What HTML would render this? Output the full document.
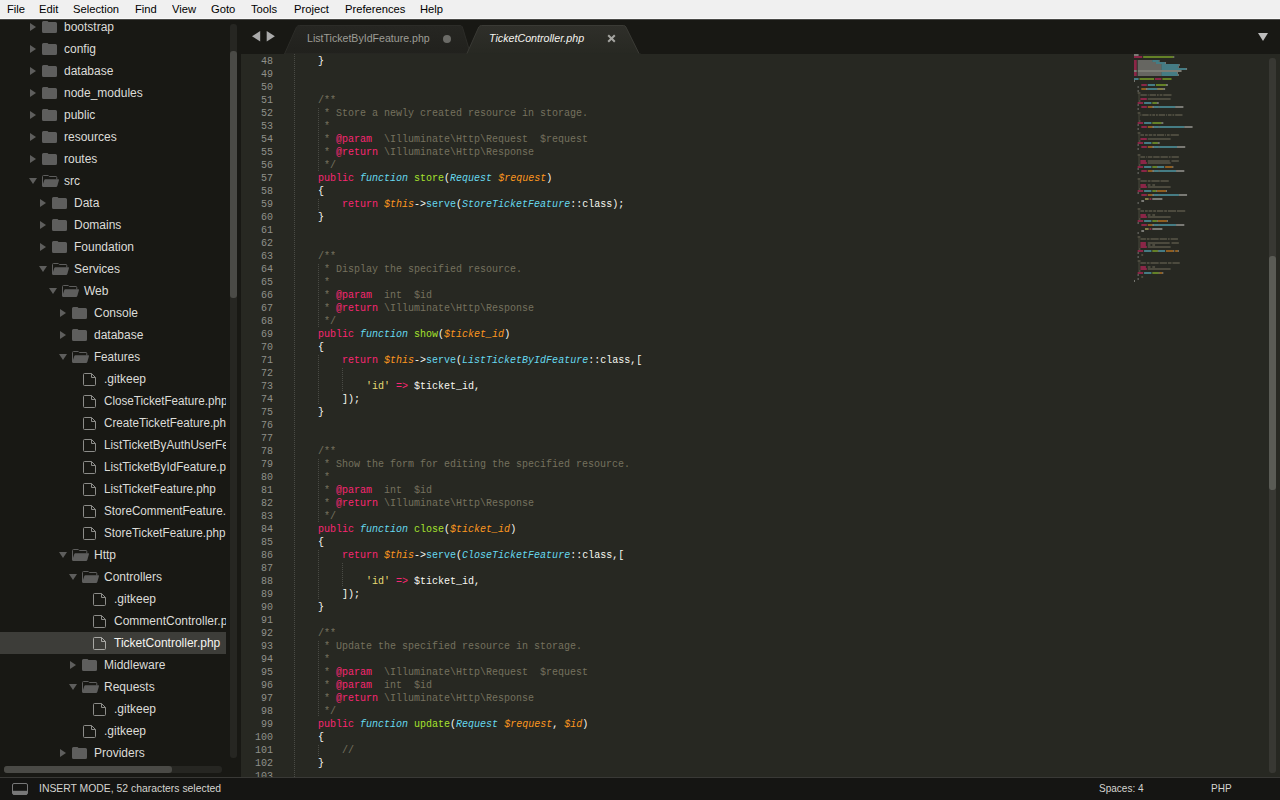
<!DOCTYPE html>
<html><head><meta charset="utf-8"><style>
html,body{margin:0;padding:0;width:1280px;height:800px;overflow:hidden;background:#181814}
*{box-sizing:border-box}
.abs{position:absolute}
#menu{position:absolute;left:0;top:0;width:1280px;height:19px;background:#f0f0f0;border-bottom:1px solid #f8f8f8}
#menu span{position:absolute;top:2px;font:11.8px "Liberation Sans",sans-serif;color:#000;white-space:nowrap;line-height:14px;transform:scaleX(0.95);transform-origin:0 0}
#side{position:absolute;left:0;top:19px;width:241px;height:758px;background:#181814;overflow:hidden}
.row{position:absolute;left:0;width:226px;height:22px}
.row.sel{background:#3d3d39}
.nm{position:absolute;top:0;font:12px "Liberation Sans",sans-serif;color:#dcdcd8;line-height:22px;white-space:nowrap}
.sel .nm{color:#f4f4f0}
#clip{position:absolute;left:0;top:0;width:226px;height:758px;overflow:hidden}
#tabbar{position:absolute;left:241px;top:19px;width:1039px;height:35px;background:#181814}
#editor{position:absolute;left:241px;top:54px;width:1039px;height:723px;background:#272822;overflow:hidden}
#status{position:absolute;left:0;top:777px;width:1280px;height:23px;background:#151513;border-top:1px solid #393936}
.ln{position:absolute;left:0;width:32px;text-align:right;font:10px "Liberation Mono",monospace;color:#8f908a;height:13px;line-height:13px;white-space:pre}
.cl{position:absolute;left:53px;font:10px "Liberation Mono",monospace;color:#f8f8f2;height:13px;line-height:13px;white-space:pre}
.k{color:#f92672}.f{color:#66d9ef;font-style:italic}.n{color:#a6e22e}.v{color:#fd971f;font-style:italic}
.c{color:#75715e}.s{color:#e6db74}.t{color:#66d9ef;font-style:italic}.sv{color:#66d9ef}
.guide{position:absolute;width:1px;background-image:linear-gradient(#4a4b45 50%,transparent 50%);background-size:1px 2px}
</style></head><body>

<div id="menu">
<span style="left:7px">File</span>
<span style="left:39px">Edit</span>
<span style="left:73px">Selection</span>
<span style="left:135px">Find</span>
<span style="left:172px">View</span>
<span style="left:211px">Goto</span>
<span style="left:251px">Tools</span>
<span style="left:294px">Project</span>
<span style="left:345px">Preferences</span>
<span style="left:420px">Help</span>
</div>
<div id="side"><div id="clip">
<div class="row" style="top:-3px">
<svg class="abs" style="left:30px;top:7px" width="6" height="8"><path d="M0 0V8L6 4Z" fill="#5e5e5d"/></svg>
<svg class="abs" style="left:42px;top:5px" width="15" height="12"><path d="M0 1.5Q0 0 1.5 0H5.5L6.5 1H13.5Q15 1 15 2.5V10.5Q15 12 13.5 12H1.5Q0 12 0 10.5Z" fill="#5e5e5d"/></svg>
<span class="nm" style="left:64px">bootstrap</span>
</div>
<div class="row" style="top:19px">
<svg class="abs" style="left:30px;top:7px" width="6" height="8"><path d="M0 0V8L6 4Z" fill="#5e5e5d"/></svg>
<svg class="abs" style="left:42px;top:5px" width="15" height="12"><path d="M0 1.5Q0 0 1.5 0H5.5L6.5 1H13.5Q15 1 15 2.5V10.5Q15 12 13.5 12H1.5Q0 12 0 10.5Z" fill="#5e5e5d"/></svg>
<span class="nm" style="left:64px">config</span>
</div>
<div class="row" style="top:41px">
<svg class="abs" style="left:30px;top:7px" width="6" height="8"><path d="M0 0V8L6 4Z" fill="#5e5e5d"/></svg>
<svg class="abs" style="left:42px;top:5px" width="15" height="12"><path d="M0 1.5Q0 0 1.5 0H5.5L6.5 1H13.5Q15 1 15 2.5V10.5Q15 12 13.5 12H1.5Q0 12 0 10.5Z" fill="#5e5e5d"/></svg>
<span class="nm" style="left:64px">database</span>
</div>
<div class="row" style="top:63px">
<svg class="abs" style="left:30px;top:7px" width="6" height="8"><path d="M0 0V8L6 4Z" fill="#5e5e5d"/></svg>
<svg class="abs" style="left:42px;top:5px" width="15" height="12"><path d="M0 1.5Q0 0 1.5 0H5.5L6.5 1H13.5Q15 1 15 2.5V10.5Q15 12 13.5 12H1.5Q0 12 0 10.5Z" fill="#5e5e5d"/></svg>
<span class="nm" style="left:64px">node_modules</span>
</div>
<div class="row" style="top:85px">
<svg class="abs" style="left:30px;top:7px" width="6" height="8"><path d="M0 0V8L6 4Z" fill="#5e5e5d"/></svg>
<svg class="abs" style="left:42px;top:5px" width="15" height="12"><path d="M0 1.5Q0 0 1.5 0H5.5L6.5 1H13.5Q15 1 15 2.5V10.5Q15 12 13.5 12H1.5Q0 12 0 10.5Z" fill="#5e5e5d"/></svg>
<span class="nm" style="left:64px">public</span>
</div>
<div class="row" style="top:107px">
<svg class="abs" style="left:30px;top:7px" width="6" height="8"><path d="M0 0V8L6 4Z" fill="#5e5e5d"/></svg>
<svg class="abs" style="left:42px;top:5px" width="15" height="12"><path d="M0 1.5Q0 0 1.5 0H5.5L6.5 1H13.5Q15 1 15 2.5V10.5Q15 12 13.5 12H1.5Q0 12 0 10.5Z" fill="#5e5e5d"/></svg>
<span class="nm" style="left:64px">resources</span>
</div>
<div class="row" style="top:129px">
<svg class="abs" style="left:30px;top:7px" width="6" height="8"><path d="M0 0V8L6 4Z" fill="#5e5e5d"/></svg>
<svg class="abs" style="left:42px;top:5px" width="15" height="12"><path d="M0 1.5Q0 0 1.5 0H5.5L6.5 1H13.5Q15 1 15 2.5V10.5Q15 12 13.5 12H1.5Q0 12 0 10.5Z" fill="#5e5e5d"/></svg>
<span class="nm" style="left:64px">routes</span>
</div>
<div class="row" style="top:151px">
<svg class="abs" style="left:29px;top:8px" width="8" height="6"><path d="M0 0H8L4 6Z" fill="#5e5e5d"/></svg>
<svg class="abs" style="left:42px;top:5px" width="18" height="13"><path d="M0.5 11V1.5Q0.5 0.5 1.5 0.5H6.3L7.3 1.5H14Q14.8 1.5 14.8 2.3V4.5" fill="none" stroke="#5e5e5d" stroke-width="1"/><path d="M3.3 4.2H16.4Q17.2 4.2 17 5L15.3 11.1Q15.1 11.9 14.4 11.9H1Q0 11.9 0.3 10.9L2.3 5Q2.6 4.2 3.3 4.2Z" fill="#5e5e5d"/></svg>
<span class="nm" style="left:64px">src</span>
</div>
<div class="row" style="top:173px">
<svg class="abs" style="left:40px;top:7px" width="6" height="8"><path d="M0 0V8L6 4Z" fill="#5e5e5d"/></svg>
<svg class="abs" style="left:52px;top:5px" width="15" height="12"><path d="M0 1.5Q0 0 1.5 0H5.5L6.5 1H13.5Q15 1 15 2.5V10.5Q15 12 13.5 12H1.5Q0 12 0 10.5Z" fill="#5e5e5d"/></svg>
<span class="nm" style="left:74px">Data</span>
</div>
<div class="row" style="top:195px">
<svg class="abs" style="left:40px;top:7px" width="6" height="8"><path d="M0 0V8L6 4Z" fill="#5e5e5d"/></svg>
<svg class="abs" style="left:52px;top:5px" width="15" height="12"><path d="M0 1.5Q0 0 1.5 0H5.5L6.5 1H13.5Q15 1 15 2.5V10.5Q15 12 13.5 12H1.5Q0 12 0 10.5Z" fill="#5e5e5d"/></svg>
<span class="nm" style="left:74px">Domains</span>
</div>
<div class="row" style="top:217px">
<svg class="abs" style="left:40px;top:7px" width="6" height="8"><path d="M0 0V8L6 4Z" fill="#5e5e5d"/></svg>
<svg class="abs" style="left:52px;top:5px" width="15" height="12"><path d="M0 1.5Q0 0 1.5 0H5.5L6.5 1H13.5Q15 1 15 2.5V10.5Q15 12 13.5 12H1.5Q0 12 0 10.5Z" fill="#5e5e5d"/></svg>
<span class="nm" style="left:74px">Foundation</span>
</div>
<div class="row" style="top:239px">
<svg class="abs" style="left:39px;top:8px" width="8" height="6"><path d="M0 0H8L4 6Z" fill="#5e5e5d"/></svg>
<svg class="abs" style="left:52px;top:5px" width="18" height="13"><path d="M0.5 11V1.5Q0.5 0.5 1.5 0.5H6.3L7.3 1.5H14Q14.8 1.5 14.8 2.3V4.5" fill="none" stroke="#5e5e5d" stroke-width="1"/><path d="M3.3 4.2H16.4Q17.2 4.2 17 5L15.3 11.1Q15.1 11.9 14.4 11.9H1Q0 11.9 0.3 10.9L2.3 5Q2.6 4.2 3.3 4.2Z" fill="#5e5e5d"/></svg>
<span class="nm" style="left:74px">Services</span>
</div>
<div class="row" style="top:261px">
<svg class="abs" style="left:49px;top:8px" width="8" height="6"><path d="M0 0H8L4 6Z" fill="#5e5e5d"/></svg>
<svg class="abs" style="left:62px;top:5px" width="18" height="13"><path d="M0.5 11V1.5Q0.5 0.5 1.5 0.5H6.3L7.3 1.5H14Q14.8 1.5 14.8 2.3V4.5" fill="none" stroke="#5e5e5d" stroke-width="1"/><path d="M3.3 4.2H16.4Q17.2 4.2 17 5L15.3 11.1Q15.1 11.9 14.4 11.9H1Q0 11.9 0.3 10.9L2.3 5Q2.6 4.2 3.3 4.2Z" fill="#5e5e5d"/></svg>
<span class="nm" style="left:84px">Web</span>
</div>
<div class="row" style="top:283px">
<svg class="abs" style="left:60px;top:7px" width="6" height="8"><path d="M0 0V8L6 4Z" fill="#5e5e5d"/></svg>
<svg class="abs" style="left:72px;top:5px" width="15" height="12"><path d="M0 1.5Q0 0 1.5 0H5.5L6.5 1H13.5Q15 1 15 2.5V10.5Q15 12 13.5 12H1.5Q0 12 0 10.5Z" fill="#5e5e5d"/></svg>
<span class="nm" style="left:94px">Console</span>
</div>
<div class="row" style="top:305px">
<svg class="abs" style="left:60px;top:7px" width="6" height="8"><path d="M0 0V8L6 4Z" fill="#5e5e5d"/></svg>
<svg class="abs" style="left:72px;top:5px" width="15" height="12"><path d="M0 1.5Q0 0 1.5 0H5.5L6.5 1H13.5Q15 1 15 2.5V10.5Q15 12 13.5 12H1.5Q0 12 0 10.5Z" fill="#5e5e5d"/></svg>
<span class="nm" style="left:94px">database</span>
</div>
<div class="row" style="top:327px">
<svg class="abs" style="left:59px;top:8px" width="8" height="6"><path d="M0 0H8L4 6Z" fill="#5e5e5d"/></svg>
<svg class="abs" style="left:72px;top:5px" width="18" height="13"><path d="M0.5 11V1.5Q0.5 0.5 1.5 0.5H6.3L7.3 1.5H14Q14.8 1.5 14.8 2.3V4.5" fill="none" stroke="#5e5e5d" stroke-width="1"/><path d="M3.3 4.2H16.4Q17.2 4.2 17 5L15.3 11.1Q15.1 11.9 14.4 11.9H1Q0 11.9 0.3 10.9L2.3 5Q2.6 4.2 3.3 4.2Z" fill="#5e5e5d"/></svg>
<span class="nm" style="left:94px;transform:scaleX(0.972);transform-origin:0 0">Features</span>
</div>
<div class="row" style="top:349px">
<svg class="abs" style="left:83px;top:5px" width="14" height="13"><path d="M0.5 1.5Q0.5 0.5 1.5 0.5H8.5L12.5 4.5V11.5Q12.5 12.5 11.5 12.5H1.5Q0.5 12.5 0.5 11.5Z" fill="none" stroke="#8c8c89" stroke-width="1"/><path d="M8.5 0.5V4.5H12.5" fill="none" stroke="#8c8c89" stroke-width="1"/></svg>
<span class="nm" style="left:104px">.gitkeep</span>
</div>
<div class="row" style="top:371px">
<svg class="abs" style="left:83px;top:5px" width="14" height="13"><path d="M0.5 1.5Q0.5 0.5 1.5 0.5H8.5L12.5 4.5V11.5Q12.5 12.5 11.5 12.5H1.5Q0.5 12.5 0.5 11.5Z" fill="none" stroke="#8c8c89" stroke-width="1"/><path d="M8.5 0.5V4.5H12.5" fill="none" stroke="#8c8c89" stroke-width="1"/></svg>
<span class="nm" style="left:104px;transform:scaleX(0.972);transform-origin:0 0">CloseTicketFeature.php</span>
</div>
<div class="row" style="top:393px">
<svg class="abs" style="left:83px;top:5px" width="14" height="13"><path d="M0.5 1.5Q0.5 0.5 1.5 0.5H8.5L12.5 4.5V11.5Q12.5 12.5 11.5 12.5H1.5Q0.5 12.5 0.5 11.5Z" fill="none" stroke="#8c8c89" stroke-width="1"/><path d="M8.5 0.5V4.5H12.5" fill="none" stroke="#8c8c89" stroke-width="1"/></svg>
<span class="nm" style="left:104px;transform:scaleX(0.972);transform-origin:0 0">CreateTicketFeature.php</span>
</div>
<div class="row" style="top:415px">
<svg class="abs" style="left:83px;top:5px" width="14" height="13"><path d="M0.5 1.5Q0.5 0.5 1.5 0.5H8.5L12.5 4.5V11.5Q12.5 12.5 11.5 12.5H1.5Q0.5 12.5 0.5 11.5Z" fill="none" stroke="#8c8c89" stroke-width="1"/><path d="M8.5 0.5V4.5H12.5" fill="none" stroke="#8c8c89" stroke-width="1"/></svg>
<span class="nm" style="left:104px;transform:scaleX(0.972);transform-origin:0 0">ListTicketByAuthUserFeature.php</span>
</div>
<div class="row" style="top:437px">
<svg class="abs" style="left:83px;top:5px" width="14" height="13"><path d="M0.5 1.5Q0.5 0.5 1.5 0.5H8.5L12.5 4.5V11.5Q12.5 12.5 11.5 12.5H1.5Q0.5 12.5 0.5 11.5Z" fill="none" stroke="#8c8c89" stroke-width="1"/><path d="M8.5 0.5V4.5H12.5" fill="none" stroke="#8c8c89" stroke-width="1"/></svg>
<span class="nm" style="left:104px;transform:scaleX(0.972);transform-origin:0 0">ListTicketByIdFeature.php</span>
</div>
<div class="row" style="top:459px">
<svg class="abs" style="left:83px;top:5px" width="14" height="13"><path d="M0.5 1.5Q0.5 0.5 1.5 0.5H8.5L12.5 4.5V11.5Q12.5 12.5 11.5 12.5H1.5Q0.5 12.5 0.5 11.5Z" fill="none" stroke="#8c8c89" stroke-width="1"/><path d="M8.5 0.5V4.5H12.5" fill="none" stroke="#8c8c89" stroke-width="1"/></svg>
<span class="nm" style="left:104px;transform:scaleX(0.972);transform-origin:0 0">ListTicketFeature.php</span>
</div>
<div class="row" style="top:481px">
<svg class="abs" style="left:83px;top:5px" width="14" height="13"><path d="M0.5 1.5Q0.5 0.5 1.5 0.5H8.5L12.5 4.5V11.5Q12.5 12.5 11.5 12.5H1.5Q0.5 12.5 0.5 11.5Z" fill="none" stroke="#8c8c89" stroke-width="1"/><path d="M8.5 0.5V4.5H12.5" fill="none" stroke="#8c8c89" stroke-width="1"/></svg>
<span class="nm" style="left:104px;transform:scaleX(0.972);transform-origin:0 0">StoreCommentFeature.php</span>
</div>
<div class="row" style="top:503px">
<svg class="abs" style="left:83px;top:5px" width="14" height="13"><path d="M0.5 1.5Q0.5 0.5 1.5 0.5H8.5L12.5 4.5V11.5Q12.5 12.5 11.5 12.5H1.5Q0.5 12.5 0.5 11.5Z" fill="none" stroke="#8c8c89" stroke-width="1"/><path d="M8.5 0.5V4.5H12.5" fill="none" stroke="#8c8c89" stroke-width="1"/></svg>
<span class="nm" style="left:104px;transform:scaleX(0.972);transform-origin:0 0">StoreTicketFeature.php</span>
</div>
<div class="row" style="top:525px">
<svg class="abs" style="left:59px;top:8px" width="8" height="6"><path d="M0 0H8L4 6Z" fill="#5e5e5d"/></svg>
<svg class="abs" style="left:72px;top:5px" width="18" height="13"><path d="M0.5 11V1.5Q0.5 0.5 1.5 0.5H6.3L7.3 1.5H14Q14.8 1.5 14.8 2.3V4.5" fill="none" stroke="#5e5e5d" stroke-width="1"/><path d="M3.3 4.2H16.4Q17.2 4.2 17 5L15.3 11.1Q15.1 11.9 14.4 11.9H1Q0 11.9 0.3 10.9L2.3 5Q2.6 4.2 3.3 4.2Z" fill="#5e5e5d"/></svg>
<span class="nm" style="left:94px">Http</span>
</div>
<div class="row" style="top:547px">
<svg class="abs" style="left:69px;top:8px" width="8" height="6"><path d="M0 0H8L4 6Z" fill="#5e5e5d"/></svg>
<svg class="abs" style="left:82px;top:5px" width="18" height="13"><path d="M0.5 11V1.5Q0.5 0.5 1.5 0.5H6.3L7.3 1.5H14Q14.8 1.5 14.8 2.3V4.5" fill="none" stroke="#5e5e5d" stroke-width="1"/><path d="M3.3 4.2H16.4Q17.2 4.2 17 5L15.3 11.1Q15.1 11.9 14.4 11.9H1Q0 11.9 0.3 10.9L2.3 5Q2.6 4.2 3.3 4.2Z" fill="#5e5e5d"/></svg>
<span class="nm" style="left:104px">Controllers</span>
</div>
<div class="row" style="top:569px">
<svg class="abs" style="left:93px;top:5px" width="14" height="13"><path d="M0.5 1.5Q0.5 0.5 1.5 0.5H8.5L12.5 4.5V11.5Q12.5 12.5 11.5 12.5H1.5Q0.5 12.5 0.5 11.5Z" fill="none" stroke="#8c8c89" stroke-width="1"/><path d="M8.5 0.5V4.5H12.5" fill="none" stroke="#8c8c89" stroke-width="1"/></svg>
<span class="nm" style="left:114px">.gitkeep</span>
</div>
<div class="row" style="top:591px">
<svg class="abs" style="left:93px;top:5px" width="14" height="13"><path d="M0.5 1.5Q0.5 0.5 1.5 0.5H8.5L12.5 4.5V11.5Q12.5 12.5 11.5 12.5H1.5Q0.5 12.5 0.5 11.5Z" fill="none" stroke="#8c8c89" stroke-width="1"/><path d="M8.5 0.5V4.5H12.5" fill="none" stroke="#8c8c89" stroke-width="1"/></svg>
<span class="nm" style="left:114px">CommentController.php</span>
</div>
<div class="row sel" style="top:613px">
<svg class="abs" style="left:93px;top:5px" width="14" height="13"><path d="M0.5 1.5Q0.5 0.5 1.5 0.5H8.5L12.5 4.5V11.5Q12.5 12.5 11.5 12.5H1.5Q0.5 12.5 0.5 11.5Z" fill="none" stroke="#a8a8a4" stroke-width="1"/><path d="M8.5 0.5V4.5H12.5" fill="none" stroke="#a8a8a4" stroke-width="1"/></svg>
<span class="nm" style="left:114px">TicketController.php</span>
</div>
<div class="row" style="top:635px">
<svg class="abs" style="left:70px;top:7px" width="6" height="8"><path d="M0 0V8L6 4Z" fill="#5e5e5d"/></svg>
<svg class="abs" style="left:82px;top:5px" width="15" height="12"><path d="M0 1.5Q0 0 1.5 0H5.5L6.5 1H13.5Q15 1 15 2.5V10.5Q15 12 13.5 12H1.5Q0 12 0 10.5Z" fill="#5e5e5d"/></svg>
<span class="nm" style="left:104px">Middleware</span>
</div>
<div class="row" style="top:657px">
<svg class="abs" style="left:69px;top:8px" width="8" height="6"><path d="M0 0H8L4 6Z" fill="#5e5e5d"/></svg>
<svg class="abs" style="left:82px;top:5px" width="18" height="13"><path d="M0.5 11V1.5Q0.5 0.5 1.5 0.5H6.3L7.3 1.5H14Q14.8 1.5 14.8 2.3V4.5" fill="none" stroke="#5e5e5d" stroke-width="1"/><path d="M3.3 4.2H16.4Q17.2 4.2 17 5L15.3 11.1Q15.1 11.9 14.4 11.9H1Q0 11.9 0.3 10.9L2.3 5Q2.6 4.2 3.3 4.2Z" fill="#5e5e5d"/></svg>
<span class="nm" style="left:104px">Requests</span>
</div>
<div class="row" style="top:679px">
<svg class="abs" style="left:93px;top:5px" width="14" height="13"><path d="M0.5 1.5Q0.5 0.5 1.5 0.5H8.5L12.5 4.5V11.5Q12.5 12.5 11.5 12.5H1.5Q0.5 12.5 0.5 11.5Z" fill="none" stroke="#8c8c89" stroke-width="1"/><path d="M8.5 0.5V4.5H12.5" fill="none" stroke="#8c8c89" stroke-width="1"/></svg>
<span class="nm" style="left:114px">.gitkeep</span>
</div>
<div class="row" style="top:701px">
<svg class="abs" style="left:83px;top:5px" width="14" height="13"><path d="M0.5 1.5Q0.5 0.5 1.5 0.5H8.5L12.5 4.5V11.5Q12.5 12.5 11.5 12.5H1.5Q0.5 12.5 0.5 11.5Z" fill="none" stroke="#8c8c89" stroke-width="1"/><path d="M8.5 0.5V4.5H12.5" fill="none" stroke="#8c8c89" stroke-width="1"/></svg>
<span class="nm" style="left:104px">.gitkeep</span>
</div>
<div class="row" style="top:723px">
<svg class="abs" style="left:60px;top:7px" width="6" height="8"><path d="M0 0V8L6 4Z" fill="#5e5e5d"/></svg>
<svg class="abs" style="left:72px;top:5px" width="15" height="12"><path d="M0 1.5Q0 0 1.5 0H5.5L6.5 1H13.5Q15 1 15 2.5V10.5Q15 12 13.5 12H1.5Q0 12 0 10.5Z" fill="#5e5e5d"/></svg>
<span class="nm" style="left:94px">Providers</span>
</div>
</div>
<div class="abs" style="left:230px;top:5px;width:7px;height:734px;background:#262622;border-radius:3px"></div>
<div class="abs" style="left:230px;top:32px;width:7px;height:247px;background:#4a4a46;border-radius:3px"></div>
<div class="abs" style="left:4px;top:747px;width:218px;height:7px;background:#262622;border-radius:3px"></div>
<div class="abs" style="left:4px;top:747px;width:168px;height:7px;background:#4a4a46;border-radius:3px"></div>
</div>
<div id="tabbar">
<div class="abs" style="left:-241px;top:0;width:1280px;height:1px;background:#4a4a48"></div>
<svg class="abs" style="left:11px;top:12px" width="24" height="12"><path d="M0 5.2L8.2 0V10.4Z" fill="#aaaaaa"/><path d="M22.9 5.2L14.7 0V10.4Z" fill="#aaaaaa"/></svg>
<svg class="abs" style="left:43px;top:6px" width="188" height="29"><defs><linearGradient id="gi" x1="0" y1="0" x2="0" y2="1"><stop offset="0" stop-color="#262622"/><stop offset="1" stop-color="#21211d"/></linearGradient></defs><path d="M0.5 29L12.5 2Q13.3 0.5 15.5 0.5H176Q177.7 0.5 178.4 2L186.5 29Z" fill="url(#gi)" stroke="#2c2c28" stroke-width="1"/></svg>
<span class="abs" style="left:66px;top:12px;font:10.6px 'Liberation Sans',sans-serif;color:#9d9d96;line-height:14px;white-space:nowrap">ListTicketByIdFeature.php</span>
<div class="abs" style="left:202px;top:16px;width:8px;height:8px;border-radius:50%;background:#6b6b67"></div>
<svg class="abs" style="left:225px;top:6px" width="175" height="29"><defs><linearGradient id="ga" x1="0" y1="0" x2="0" y2="1"><stop offset="0" stop-color="#2f2f2a"/><stop offset="1" stop-color="#272822"/></linearGradient></defs><path d="M0.5 29.5L12.8 2Q13.6 0.5 15.8 0.5H157.5Q159.2 0.5 159.9 2L173.5 29.5Z" fill="url(#ga)" stroke="#3a3a35" stroke-width="1"/><rect x="0" y="28.5" width="175" height="1" fill="#272822"/></svg>
<span class="abs" style="left:248px;top:12px;font:italic 10.7px 'Liberation Sans',sans-serif;color:#f4f4f0;line-height:14px;white-space:nowrap">TicketController.php</span>
<svg class="abs" style="left:366px;top:15px" width="9" height="9"><path d="M1.2 1.2L7.8 7.8M7.8 1.2L1.2 7.8" stroke="#a4a4a0" stroke-width="2"/></svg>
<svg class="abs" style="left:1017px;top:14px" width="10" height="8"><path d="M0 0H10L5 8Z" fill="#bdbdbd"/></svg>
</div>
<div id="editor">
<div class="ln" style="top:1px">48</div>
<div class="cl" style="top:1px">    }</div>
<div class="ln" style="top:14px">49</div>
<div class="ln" style="top:27px">50</div>
<div class="ln" style="top:40px">51</div>
<div class="cl" style="top:40px">    <span class="c">/**</span></div>
<div class="ln" style="top:53px">52</div>
<div class="cl" style="top:53px">    <span class="c"> * Store a newly created resource in storage.</span></div>
<div class="ln" style="top:66px">53</div>
<div class="cl" style="top:66px">    <span class="c"> *</span></div>
<div class="ln" style="top:79px">54</div>
<div class="cl" style="top:79px">    <span class="c"> * </span><span class="k">@param</span><span class="c">  \Illuminate\Http\Request  $request</span></div>
<div class="ln" style="top:92px">55</div>
<div class="cl" style="top:92px">    <span class="c"> * </span><span class="k">@return</span><span class="c"> \Illuminate\Http\Response</span></div>
<div class="ln" style="top:105px">56</div>
<div class="cl" style="top:105px">    <span class="c"> */</span></div>
<div class="ln" style="top:118px">57</div>
<div class="cl" style="top:118px">    <span class="k">public</span> <span class="f">function</span> <span class="n">store</span>(<span class="t">Request</span> <span class="v">$request</span>)</div>
<div class="ln" style="top:131px">58</div>
<div class="cl" style="top:131px">    {</div>
<div class="ln" style="top:144px">59</div>
<div class="cl" style="top:144px">        <span class="k">return</span> <span class="v">$this</span>-&gt;<span class="sv">serve</span>(<span class="t">StoreTicketFeature</span>::class);</div>
<div class="ln" style="top:157px">60</div>
<div class="cl" style="top:157px">    }</div>
<div class="ln" style="top:170px">61</div>
<div class="ln" style="top:183px">62</div>
<div class="ln" style="top:196px">63</div>
<div class="cl" style="top:196px">    <span class="c">/**</span></div>
<div class="ln" style="top:209px">64</div>
<div class="cl" style="top:209px">    <span class="c"> * Display the specified resource.</span></div>
<div class="ln" style="top:222px">65</div>
<div class="cl" style="top:222px">    <span class="c"> *</span></div>
<div class="ln" style="top:235px">66</div>
<div class="cl" style="top:235px">    <span class="c"> * </span><span class="k">@param</span><span class="c">  int  $id</span></div>
<div class="ln" style="top:248px">67</div>
<div class="cl" style="top:248px">    <span class="c"> * </span><span class="k">@return</span><span class="c"> \Illuminate\Http\Response</span></div>
<div class="ln" style="top:261px">68</div>
<div class="cl" style="top:261px">    <span class="c"> */</span></div>
<div class="ln" style="top:274px">69</div>
<div class="cl" style="top:274px">    <span class="k">public</span> <span class="f">function</span> <span class="n">show</span>(<span class="v">$ticket_id</span>)</div>
<div class="ln" style="top:287px">70</div>
<div class="cl" style="top:287px">    {</div>
<div class="ln" style="top:300px">71</div>
<div class="cl" style="top:300px">        <span class="k">return</span> <span class="v">$this</span>-&gt;<span class="sv">serve</span>(<span class="t">ListTicketByIdFeature</span>::class,[</div>
<div class="ln" style="top:313px">72</div>
<div class="ln" style="top:326px">73</div>
<div class="cl" style="top:326px">            <span class="s">&#x27;id&#x27;</span> <span class="k">=&gt;</span> $ticket_id,</div>
<div class="ln" style="top:339px">74</div>
<div class="cl" style="top:339px">        ]);</div>
<div class="ln" style="top:352px">75</div>
<div class="cl" style="top:352px">    }</div>
<div class="ln" style="top:365px">76</div>
<div class="ln" style="top:378px">77</div>
<div class="ln" style="top:391px">78</div>
<div class="cl" style="top:391px">    <span class="c">/**</span></div>
<div class="ln" style="top:404px">79</div>
<div class="cl" style="top:404px">    <span class="c"> * Show the form for editing the specified resource.</span></div>
<div class="ln" style="top:417px">80</div>
<div class="cl" style="top:417px">    <span class="c"> *</span></div>
<div class="ln" style="top:430px">81</div>
<div class="cl" style="top:430px">    <span class="c"> * </span><span class="k">@param</span><span class="c">  int  $id</span></div>
<div class="ln" style="top:443px">82</div>
<div class="cl" style="top:443px">    <span class="c"> * </span><span class="k">@return</span><span class="c"> \Illuminate\Http\Response</span></div>
<div class="ln" style="top:456px">83</div>
<div class="cl" style="top:456px">    <span class="c"> */</span></div>
<div class="ln" style="top:469px">84</div>
<div class="cl" style="top:469px">    <span class="k">public</span> <span class="f">function</span> <span class="n">close</span>(<span class="v">$ticket_id</span>)</div>
<div class="ln" style="top:482px">85</div>
<div class="cl" style="top:482px">    {</div>
<div class="ln" style="top:495px">86</div>
<div class="cl" style="top:495px">        <span class="k">return</span> <span class="v">$this</span>-&gt;<span class="sv">serve</span>(<span class="t">CloseTicketFeature</span>::class,[</div>
<div class="ln" style="top:508px">87</div>
<div class="ln" style="top:521px">88</div>
<div class="cl" style="top:521px">            <span class="s">&#x27;id&#x27;</span> <span class="k">=&gt;</span> $ticket_id,</div>
<div class="ln" style="top:534px">89</div>
<div class="cl" style="top:534px">        ]);</div>
<div class="ln" style="top:547px">90</div>
<div class="cl" style="top:547px">    }</div>
<div class="ln" style="top:560px">91</div>
<div class="ln" style="top:573px">92</div>
<div class="cl" style="top:573px">    <span class="c">/**</span></div>
<div class="ln" style="top:586px">93</div>
<div class="cl" style="top:586px">    <span class="c"> * Update the specified resource in storage.</span></div>
<div class="ln" style="top:599px">94</div>
<div class="cl" style="top:599px">    <span class="c"> *</span></div>
<div class="ln" style="top:612px">95</div>
<div class="cl" style="top:612px">    <span class="c"> * </span><span class="k">@param</span><span class="c">  \Illuminate\Http\Request  $request</span></div>
<div class="ln" style="top:625px">96</div>
<div class="cl" style="top:625px">    <span class="c"> * </span><span class="k">@param</span><span class="c">  int  $id</span></div>
<div class="ln" style="top:638px">97</div>
<div class="cl" style="top:638px">    <span class="c"> * </span><span class="k">@return</span><span class="c"> \Illuminate\Http\Response</span></div>
<div class="ln" style="top:651px">98</div>
<div class="cl" style="top:651px">    <span class="c"> */</span></div>
<div class="ln" style="top:664px">99</div>
<div class="cl" style="top:664px">    <span class="k">public</span> <span class="f">function</span> <span class="n">update</span>(<span class="t">Request</span> <span class="v">$request</span>, <span class="v">$id</span>)</div>
<div class="ln" style="top:677px">100</div>
<div class="cl" style="top:677px">    {</div>
<div class="ln" style="top:690px">101</div>
<div class="cl" style="top:690px">        <span class="c">//</span></div>
<div class="ln" style="top:703px">102</div>
<div class="cl" style="top:703px">    }</div>
<div class="ln" style="top:716px">103</div>
<div class="guide" style="left:53px;top:0;height:723px"></div>
<div class="guide" style="left:77px;top:54px;height:63px"></div>
<div class="guide" style="left:77px;top:145px;height:11px"></div>
<div class="guide" style="left:77px;top:210px;height:63px"></div>
<div class="guide" style="left:77px;top:301px;height:50px"></div>
<div class="guide" style="left:77px;top:405px;height:63px"></div>
<div class="guide" style="left:77px;top:496px;height:50px"></div>
<div class="guide" style="left:77px;top:587px;height:76px"></div>
<div class="guide" style="left:77px;top:691px;height:11px"></div>
<div class="guide" style="left:101px;top:314px;height:24px"></div>
<div class="guide" style="left:101px;top:509px;height:24px"></div>
<div class="abs" style="left:1028px;top:4px;width:7px;height:715px;background:#383833;border-radius:3px"></div>
<div class="abs" style="left:1028px;top:202px;width:7px;height:234px;background:#5a5b55;border-radius:3px"></div>
<svg class="abs" style="left:0;top:0" width="1039" height="300" viewBox="0 0 1039 300"><rect x="893.00" y="0.20" width="4.58" height="1.6" fill="#f8f8f2" fill-opacity="0.5"/><rect x="893.00" y="2.20" width="8.23" height="1.6" fill="#f92672" fill-opacity="0.6"/><rect x="902.15" y="2.20" width="30.20" height="1.6" fill="#a6e22e" fill-opacity="0.6"/><rect x="932.35" y="2.20" width="0.92" height="1.6" fill="#f8f8f2" fill-opacity="0.5"/><rect x="893.00" y="6.20" width="2.75" height="1.6" fill="#f92672" fill-opacity="0.6"/><rect x="896.66" y="6.20" width="14.64" height="1.6" fill="#f8f8f2" fill-opacity="0.38"/><rect x="911.30" y="6.20" width="6.41" height="1.6" fill="#66d9ef" fill-opacity="0.6"/><rect x="917.71" y="6.20" width="0.92" height="1.6" fill="#f8f8f2" fill-opacity="0.5"/><rect x="893.00" y="8.20" width="2.75" height="1.6" fill="#f92672" fill-opacity="0.6"/><rect x="896.66" y="8.20" width="18.30" height="1.6" fill="#f8f8f2" fill-opacity="0.38"/><rect x="914.96" y="8.20" width="9.15" height="1.6" fill="#66d9ef" fill-opacity="0.6"/><rect x="924.11" y="8.20" width="0.92" height="1.6" fill="#f8f8f2" fill-opacity="0.5"/><rect x="893.00" y="10.20" width="2.75" height="1.6" fill="#f92672" fill-opacity="0.6"/><rect x="896.66" y="10.20" width="23.79" height="1.6" fill="#f8f8f2" fill-opacity="0.38"/><rect x="920.45" y="10.20" width="17.39" height="1.6" fill="#66d9ef" fill-opacity="0.6"/><rect x="937.84" y="10.20" width="0.92" height="1.6" fill="#f8f8f2" fill-opacity="0.5"/><rect x="893.00" y="12.20" width="2.75" height="1.6" fill="#f92672" fill-opacity="0.6"/><rect x="896.66" y="12.20" width="23.79" height="1.6" fill="#f8f8f2" fill-opacity="0.38"/><rect x="920.45" y="12.20" width="16.47" height="1.6" fill="#66d9ef" fill-opacity="0.6"/><rect x="936.92" y="12.20" width="0.92" height="1.6" fill="#f8f8f2" fill-opacity="0.5"/><rect x="893.00" y="14.20" width="2.75" height="1.6" fill="#f92672" fill-opacity="0.6"/><rect x="896.66" y="14.20" width="23.79" height="1.6" fill="#f8f8f2" fill-opacity="0.38"/><rect x="920.45" y="14.20" width="24.71" height="1.6" fill="#66d9ef" fill-opacity="0.6"/><rect x="945.15" y="14.20" width="0.92" height="1.6" fill="#f8f8f2" fill-opacity="0.5"/><rect x="893.00" y="16.20" width="2.75" height="1.6" fill="#e8e8dc" fill-opacity="0.55"/><rect x="896.66" y="16.20" width="43.92" height="1.6" fill="#e8e8dc" fill-opacity="0.55"/><rect x="893.00" y="18.20" width="2.75" height="1.6" fill="#f92672" fill-opacity="0.6"/><rect x="896.66" y="18.20" width="23.79" height="1.6" fill="#f8f8f2" fill-opacity="0.38"/><rect x="920.45" y="18.20" width="15.55" height="1.6" fill="#66d9ef" fill-opacity="0.6"/><rect x="936.00" y="18.20" width="0.92" height="1.6" fill="#f8f8f2" fill-opacity="0.5"/><rect x="893.00" y="20.20" width="2.75" height="1.6" fill="#f92672" fill-opacity="0.6"/><rect x="896.66" y="20.20" width="23.79" height="1.6" fill="#f8f8f2" fill-opacity="0.38"/><rect x="920.45" y="20.20" width="16.47" height="1.6" fill="#66d9ef" fill-opacity="0.6"/><rect x="936.92" y="20.20" width="0.92" height="1.6" fill="#f8f8f2" fill-opacity="0.5"/><rect x="893.00" y="24.20" width="4.58" height="1.6" fill="#66d9ef" fill-opacity="0.6"/><rect x="898.49" y="24.20" width="14.64" height="1.6" fill="#a6e22e" fill-opacity="0.6"/><rect x="914.04" y="24.20" width="6.41" height="1.6" fill="#f92672" fill-opacity="0.6"/><rect x="921.37" y="24.20" width="9.15" height="1.6" fill="#a6e22e" fill-opacity="0.6"/><rect x="893.00" y="26.20" width="0.92" height="1.6" fill="#f8f8f2" fill-opacity="0.5"/><rect x="900.32" y="30.20" width="5.49" height="1.6" fill="#f92672" fill-opacity="0.6"/><rect x="906.73" y="30.20" width="7.32" height="1.6" fill="#66d9ef" fill-opacity="0.6"/><rect x="914.96" y="30.20" width="10.07" height="1.6" fill="#a6e22e" fill-opacity="0.6"/><rect x="925.02" y="30.20" width="0.92" height="1.6" fill="#f8f8f2" fill-opacity="0.5"/><rect x="925.94" y="30.20" width="0.92" height="1.6" fill="#f8f8f2" fill-opacity="0.5"/><rect x="896.66" y="32.20" width="0.92" height="1.6" fill="#f8f8f2" fill-opacity="0.5"/><rect x="900.32" y="34.20" width="4.58" height="1.6" fill="#fd971f" fill-opacity="0.6"/><rect x="904.89" y="34.20" width="1.83" height="1.6" fill="#f8f8f2" fill-opacity="0.5"/><rect x="906.73" y="34.20" width="9.15" height="1.6" fill="#66d9ef" fill-opacity="0.6"/><rect x="915.88" y="34.20" width="0.92" height="1.6" fill="#f8f8f2" fill-opacity="0.5"/><rect x="916.79" y="34.20" width="5.49" height="1.6" fill="#e6db74" fill-opacity="0.6"/><rect x="922.28" y="34.20" width="1.83" height="1.6" fill="#f8f8f2" fill-opacity="0.5"/><rect x="896.66" y="36.20" width="0.92" height="1.6" fill="#f8f8f2" fill-opacity="0.5"/><rect x="896.66" y="38.20" width="2.75" height="1.6" fill="#75715e" fill-opacity="0.6"/><rect x="897.58" y="40.20" width="0.92" height="1.6" fill="#75715e" fill-opacity="0.6"/><rect x="899.40" y="40.20" width="6.41" height="1.6" fill="#75715e" fill-opacity="0.6"/><rect x="906.73" y="40.20" width="0.92" height="1.6" fill="#75715e" fill-opacity="0.6"/><rect x="908.55" y="40.20" width="6.41" height="1.6" fill="#75715e" fill-opacity="0.6"/><rect x="915.88" y="40.20" width="1.83" height="1.6" fill="#75715e" fill-opacity="0.6"/><rect x="918.62" y="40.20" width="2.75" height="1.6" fill="#75715e" fill-opacity="0.6"/><rect x="922.28" y="40.20" width="8.23" height="1.6" fill="#75715e" fill-opacity="0.6"/><rect x="897.58" y="42.20" width="0.92" height="1.6" fill="#75715e" fill-opacity="0.6"/><rect x="897.58" y="44.20" width="0.92" height="1.6" fill="#75715e" fill-opacity="0.6"/><rect x="899.40" y="44.20" width="6.41" height="1.6" fill="#f92672" fill-opacity="0.6"/><rect x="906.73" y="44.20" width="22.88" height="1.6" fill="#75715e" fill-opacity="0.6"/><rect x="897.58" y="46.20" width="1.83" height="1.6" fill="#75715e" fill-opacity="0.6"/><rect x="896.66" y="48.20" width="5.49" height="1.6" fill="#f92672" fill-opacity="0.6"/><rect x="903.07" y="48.20" width="7.32" height="1.6" fill="#66d9ef" fill-opacity="0.6"/><rect x="911.30" y="48.20" width="4.58" height="1.6" fill="#a6e22e" fill-opacity="0.6"/><rect x="915.88" y="48.20" width="0.92" height="1.6" fill="#f8f8f2" fill-opacity="0.5"/><rect x="916.79" y="48.20" width="0.92" height="1.6" fill="#f8f8f2" fill-opacity="0.5"/><rect x="896.66" y="50.20" width="0.92" height="1.6" fill="#f8f8f2" fill-opacity="0.5"/><rect x="900.32" y="52.20" width="5.49" height="1.6" fill="#f92672" fill-opacity="0.6"/><rect x="906.73" y="52.20" width="4.58" height="1.6" fill="#fd971f" fill-opacity="0.6"/><rect x="911.30" y="52.20" width="1.83" height="1.6" fill="#f8f8f2" fill-opacity="0.5"/><rect x="913.13" y="52.20" width="4.58" height="1.6" fill="#66d9ef" fill-opacity="0.6"/><rect x="917.71" y="52.20" width="0.92" height="1.6" fill="#f8f8f2" fill-opacity="0.5"/><rect x="918.62" y="52.20" width="15.55" height="1.6" fill="#66d9ef" fill-opacity="0.6"/><rect x="934.17" y="52.20" width="8.23" height="1.6" fill="#f8f8f2" fill-opacity="0.5"/><rect x="896.66" y="54.20" width="0.92" height="1.6" fill="#f8f8f2" fill-opacity="0.5"/><rect x="896.66" y="58.20" width="2.75" height="1.6" fill="#75715e" fill-opacity="0.6"/><rect x="897.58" y="60.20" width="0.92" height="1.6" fill="#75715e" fill-opacity="0.6"/><rect x="899.40" y="60.20" width="0.92" height="1.6" fill="#75715e" fill-opacity="0.6"/><rect x="901.24" y="60.20" width="6.41" height="1.6" fill="#75715e" fill-opacity="0.6"/><rect x="908.55" y="60.20" width="1.83" height="1.6" fill="#75715e" fill-opacity="0.6"/><rect x="911.30" y="60.20" width="2.75" height="1.6" fill="#75715e" fill-opacity="0.6"/><rect x="914.96" y="60.20" width="1.83" height="1.6" fill="#75715e" fill-opacity="0.6"/><rect x="917.71" y="60.20" width="6.41" height="1.6" fill="#75715e" fill-opacity="0.6"/><rect x="925.02" y="60.20" width="0.92" height="1.6" fill="#75715e" fill-opacity="0.6"/><rect x="926.86" y="60.20" width="3.66" height="1.6" fill="#75715e" fill-opacity="0.6"/><rect x="931.43" y="60.20" width="1.83" height="1.6" fill="#75715e" fill-opacity="0.6"/><rect x="934.17" y="60.20" width="7.32" height="1.6" fill="#75715e" fill-opacity="0.6"/><rect x="897.58" y="62.20" width="0.92" height="1.6" fill="#75715e" fill-opacity="0.6"/><rect x="897.58" y="64.20" width="0.92" height="1.6" fill="#75715e" fill-opacity="0.6"/><rect x="897.58" y="66.20" width="1.83" height="1.6" fill="#75715e" fill-opacity="0.6"/><rect x="896.66" y="68.20" width="5.49" height="1.6" fill="#f92672" fill-opacity="0.6"/><rect x="903.07" y="68.20" width="7.32" height="1.6" fill="#66d9ef" fill-opacity="0.6"/><rect x="911.30" y="68.20" width="9.15" height="1.6" fill="#a6e22e" fill-opacity="0.6"/><rect x="920.45" y="68.20" width="0.92" height="1.6" fill="#f8f8f2" fill-opacity="0.5"/><rect x="921.37" y="68.20" width="0.92" height="1.6" fill="#f8f8f2" fill-opacity="0.5"/><rect x="896.66" y="70.20" width="0.92" height="1.6" fill="#f8f8f2" fill-opacity="0.5"/><rect x="900.32" y="72.20" width="5.49" height="1.6" fill="#f92672" fill-opacity="0.6"/><rect x="906.73" y="72.20" width="4.58" height="1.6" fill="#fd971f" fill-opacity="0.6"/><rect x="911.30" y="72.20" width="1.83" height="1.6" fill="#f8f8f2" fill-opacity="0.5"/><rect x="913.13" y="72.20" width="4.58" height="1.6" fill="#66d9ef" fill-opacity="0.6"/><rect x="917.71" y="72.20" width="0.92" height="1.6" fill="#f8f8f2" fill-opacity="0.5"/><rect x="918.62" y="72.20" width="24.71" height="1.6" fill="#66d9ef" fill-opacity="0.6"/><rect x="943.33" y="72.20" width="8.23" height="1.6" fill="#f8f8f2" fill-opacity="0.5"/><rect x="896.66" y="74.20" width="0.92" height="1.6" fill="#f8f8f2" fill-opacity="0.5"/><rect x="896.66" y="78.20" width="2.75" height="1.6" fill="#75715e" fill-opacity="0.6"/><rect x="897.58" y="80.20" width="0.92" height="1.6" fill="#75715e" fill-opacity="0.6"/><rect x="899.40" y="80.20" width="3.66" height="1.6" fill="#75715e" fill-opacity="0.6"/><rect x="903.98" y="80.20" width="2.75" height="1.6" fill="#75715e" fill-opacity="0.6"/><rect x="907.64" y="80.20" width="3.66" height="1.6" fill="#75715e" fill-opacity="0.6"/><rect x="912.22" y="80.20" width="2.75" height="1.6" fill="#75715e" fill-opacity="0.6"/><rect x="915.88" y="80.20" width="7.32" height="1.6" fill="#75715e" fill-opacity="0.6"/><rect x="924.11" y="80.20" width="0.92" height="1.6" fill="#75715e" fill-opacity="0.6"/><rect x="925.94" y="80.20" width="2.75" height="1.6" fill="#75715e" fill-opacity="0.6"/><rect x="929.60" y="80.20" width="8.23" height="1.6" fill="#75715e" fill-opacity="0.6"/><rect x="897.58" y="82.20" width="0.92" height="1.6" fill="#75715e" fill-opacity="0.6"/><rect x="897.58" y="84.20" width="0.92" height="1.6" fill="#75715e" fill-opacity="0.6"/><rect x="899.40" y="84.20" width="6.41" height="1.6" fill="#f92672" fill-opacity="0.6"/><rect x="906.73" y="84.20" width="22.88" height="1.6" fill="#75715e" fill-opacity="0.6"/><rect x="897.58" y="86.20" width="1.83" height="1.6" fill="#75715e" fill-opacity="0.6"/><rect x="896.66" y="88.20" width="5.49" height="1.6" fill="#f92672" fill-opacity="0.6"/><rect x="903.07" y="88.20" width="7.32" height="1.6" fill="#66d9ef" fill-opacity="0.6"/><rect x="911.30" y="88.20" width="5.49" height="1.6" fill="#a6e22e" fill-opacity="0.6"/><rect x="916.79" y="88.20" width="0.92" height="1.6" fill="#f8f8f2" fill-opacity="0.5"/><rect x="917.71" y="88.20" width="0.92" height="1.6" fill="#f8f8f2" fill-opacity="0.5"/><rect x="896.66" y="90.20" width="0.92" height="1.6" fill="#f8f8f2" fill-opacity="0.5"/><rect x="900.32" y="92.20" width="5.49" height="1.6" fill="#f92672" fill-opacity="0.6"/><rect x="906.73" y="92.20" width="4.58" height="1.6" fill="#fd971f" fill-opacity="0.6"/><rect x="911.30" y="92.20" width="1.83" height="1.6" fill="#f8f8f2" fill-opacity="0.5"/><rect x="913.13" y="92.20" width="4.58" height="1.6" fill="#66d9ef" fill-opacity="0.6"/><rect x="917.71" y="92.20" width="0.92" height="1.6" fill="#f8f8f2" fill-opacity="0.5"/><rect x="918.62" y="92.20" width="17.39" height="1.6" fill="#66d9ef" fill-opacity="0.6"/><rect x="936.00" y="92.20" width="8.23" height="1.6" fill="#f8f8f2" fill-opacity="0.5"/><rect x="896.66" y="94.20" width="0.92" height="1.6" fill="#f8f8f2" fill-opacity="0.5"/><rect x="896.66" y="100.20" width="2.75" height="1.6" fill="#75715e" fill-opacity="0.6"/><rect x="897.58" y="102.20" width="0.92" height="1.6" fill="#75715e" fill-opacity="0.6"/><rect x="899.40" y="102.20" width="4.58" height="1.6" fill="#75715e" fill-opacity="0.6"/><rect x="904.89" y="102.20" width="0.92" height="1.6" fill="#75715e" fill-opacity="0.6"/><rect x="906.73" y="102.20" width="4.58" height="1.6" fill="#75715e" fill-opacity="0.6"/><rect x="912.22" y="102.20" width="6.41" height="1.6" fill="#75715e" fill-opacity="0.6"/><rect x="919.53" y="102.20" width="7.32" height="1.6" fill="#75715e" fill-opacity="0.6"/><rect x="927.77" y="102.20" width="1.83" height="1.6" fill="#75715e" fill-opacity="0.6"/><rect x="930.51" y="102.20" width="7.32" height="1.6" fill="#75715e" fill-opacity="0.6"/><rect x="897.58" y="104.20" width="0.92" height="1.6" fill="#75715e" fill-opacity="0.6"/><rect x="897.58" y="106.20" width="0.92" height="1.6" fill="#75715e" fill-opacity="0.6"/><rect x="899.40" y="106.20" width="5.49" height="1.6" fill="#f92672" fill-opacity="0.6"/><rect x="906.73" y="106.20" width="21.96" height="1.6" fill="#75715e" fill-opacity="0.6"/><rect x="930.51" y="106.20" width="7.32" height="1.6" fill="#75715e" fill-opacity="0.6"/><rect x="897.58" y="108.20" width="0.92" height="1.6" fill="#75715e" fill-opacity="0.6"/><rect x="899.40" y="108.20" width="6.41" height="1.6" fill="#f92672" fill-opacity="0.6"/><rect x="906.73" y="108.20" width="22.88" height="1.6" fill="#75715e" fill-opacity="0.6"/><rect x="897.58" y="110.20" width="1.83" height="1.6" fill="#75715e" fill-opacity="0.6"/><rect x="896.66" y="112.20" width="5.49" height="1.6" fill="#f92672" fill-opacity="0.6"/><rect x="903.07" y="112.20" width="7.32" height="1.6" fill="#66d9ef" fill-opacity="0.6"/><rect x="911.30" y="112.20" width="4.58" height="1.6" fill="#a6e22e" fill-opacity="0.6"/><rect x="915.88" y="112.20" width="0.92" height="1.6" fill="#f8f8f2" fill-opacity="0.5"/><rect x="916.79" y="112.20" width="6.41" height="1.6" fill="#66d9ef" fill-opacity="0.6"/><rect x="924.11" y="112.20" width="7.32" height="1.6" fill="#fd971f" fill-opacity="0.6"/><rect x="931.43" y="112.20" width="0.92" height="1.6" fill="#f8f8f2" fill-opacity="0.5"/><rect x="896.66" y="114.20" width="0.92" height="1.6" fill="#f8f8f2" fill-opacity="0.5"/><rect x="900.32" y="116.20" width="5.49" height="1.6" fill="#f92672" fill-opacity="0.6"/><rect x="906.73" y="116.20" width="4.58" height="1.6" fill="#fd971f" fill-opacity="0.6"/><rect x="911.30" y="116.20" width="1.83" height="1.6" fill="#f8f8f2" fill-opacity="0.5"/><rect x="913.13" y="116.20" width="4.58" height="1.6" fill="#66d9ef" fill-opacity="0.6"/><rect x="917.71" y="116.20" width="0.92" height="1.6" fill="#f8f8f2" fill-opacity="0.5"/><rect x="918.62" y="116.20" width="16.47" height="1.6" fill="#66d9ef" fill-opacity="0.6"/><rect x="935.09" y="116.20" width="8.23" height="1.6" fill="#f8f8f2" fill-opacity="0.5"/><rect x="896.66" y="118.20" width="0.92" height="1.6" fill="#f8f8f2" fill-opacity="0.5"/><rect x="896.66" y="124.20" width="2.75" height="1.6" fill="#75715e" fill-opacity="0.6"/><rect x="897.58" y="126.20" width="0.92" height="1.6" fill="#75715e" fill-opacity="0.6"/><rect x="899.40" y="126.20" width="6.41" height="1.6" fill="#75715e" fill-opacity="0.6"/><rect x="906.73" y="126.20" width="2.75" height="1.6" fill="#75715e" fill-opacity="0.6"/><rect x="910.38" y="126.20" width="8.23" height="1.6" fill="#75715e" fill-opacity="0.6"/><rect x="919.53" y="126.20" width="8.23" height="1.6" fill="#75715e" fill-opacity="0.6"/><rect x="897.58" y="128.20" width="0.92" height="1.6" fill="#75715e" fill-opacity="0.6"/><rect x="897.58" y="130.20" width="0.92" height="1.6" fill="#75715e" fill-opacity="0.6"/><rect x="899.40" y="130.20" width="5.49" height="1.6" fill="#f92672" fill-opacity="0.6"/><rect x="906.73" y="130.20" width="2.75" height="1.6" fill="#75715e" fill-opacity="0.6"/><rect x="911.30" y="130.20" width="2.75" height="1.6" fill="#75715e" fill-opacity="0.6"/><rect x="897.58" y="132.20" width="0.92" height="1.6" fill="#75715e" fill-opacity="0.6"/><rect x="899.40" y="132.20" width="6.41" height="1.6" fill="#f92672" fill-opacity="0.6"/><rect x="906.73" y="132.20" width="22.88" height="1.6" fill="#75715e" fill-opacity="0.6"/><rect x="897.58" y="134.20" width="1.83" height="1.6" fill="#75715e" fill-opacity="0.6"/><rect x="896.66" y="136.20" width="5.49" height="1.6" fill="#f92672" fill-opacity="0.6"/><rect x="903.07" y="136.20" width="7.32" height="1.6" fill="#66d9ef" fill-opacity="0.6"/><rect x="911.30" y="136.20" width="3.66" height="1.6" fill="#a6e22e" fill-opacity="0.6"/><rect x="914.96" y="136.20" width="0.92" height="1.6" fill="#f8f8f2" fill-opacity="0.5"/><rect x="915.88" y="136.20" width="9.15" height="1.6" fill="#fd971f" fill-opacity="0.6"/><rect x="925.02" y="136.20" width="0.92" height="1.6" fill="#f8f8f2" fill-opacity="0.5"/><rect x="896.66" y="138.20" width="0.92" height="1.6" fill="#f8f8f2" fill-opacity="0.5"/><rect x="900.32" y="140.20" width="5.49" height="1.6" fill="#f92672" fill-opacity="0.6"/><rect x="906.73" y="140.20" width="4.58" height="1.6" fill="#fd971f" fill-opacity="0.6"/><rect x="911.30" y="140.20" width="1.83" height="1.6" fill="#f8f8f2" fill-opacity="0.5"/><rect x="913.13" y="140.20" width="4.58" height="1.6" fill="#66d9ef" fill-opacity="0.6"/><rect x="917.71" y="140.20" width="0.92" height="1.6" fill="#f8f8f2" fill-opacity="0.5"/><rect x="918.62" y="140.20" width="19.21" height="1.6" fill="#66d9ef" fill-opacity="0.6"/><rect x="937.84" y="140.20" width="8.23" height="1.6" fill="#f8f8f2" fill-opacity="0.5"/><rect x="903.98" y="144.20" width="3.66" height="1.6" fill="#e6db74" fill-opacity="0.6"/><rect x="908.55" y="144.20" width="1.83" height="1.6" fill="#f92672" fill-opacity="0.6"/><rect x="911.30" y="144.20" width="10.07" height="1.6" fill="#f8f8f2" fill-opacity="0.5"/><rect x="900.32" y="146.20" width="2.75" height="1.6" fill="#f8f8f2" fill-opacity="0.5"/><rect x="896.66" y="148.20" width="0.92" height="1.6" fill="#f8f8f2" fill-opacity="0.5"/><rect x="896.66" y="154.20" width="2.75" height="1.6" fill="#75715e" fill-opacity="0.6"/><rect x="897.58" y="156.20" width="0.92" height="1.6" fill="#75715e" fill-opacity="0.6"/><rect x="899.40" y="156.20" width="3.66" height="1.6" fill="#75715e" fill-opacity="0.6"/><rect x="903.98" y="156.20" width="2.75" height="1.6" fill="#75715e" fill-opacity="0.6"/><rect x="907.64" y="156.20" width="3.66" height="1.6" fill="#75715e" fill-opacity="0.6"/><rect x="912.22" y="156.20" width="2.75" height="1.6" fill="#75715e" fill-opacity="0.6"/><rect x="915.88" y="156.20" width="6.41" height="1.6" fill="#75715e" fill-opacity="0.6"/><rect x="923.20" y="156.20" width="2.75" height="1.6" fill="#75715e" fill-opacity="0.6"/><rect x="926.86" y="156.20" width="8.23" height="1.6" fill="#75715e" fill-opacity="0.6"/><rect x="936.00" y="156.20" width="8.23" height="1.6" fill="#75715e" fill-opacity="0.6"/><rect x="897.58" y="158.20" width="0.92" height="1.6" fill="#75715e" fill-opacity="0.6"/><rect x="897.58" y="160.20" width="0.92" height="1.6" fill="#75715e" fill-opacity="0.6"/><rect x="899.40" y="160.20" width="5.49" height="1.6" fill="#f92672" fill-opacity="0.6"/><rect x="906.73" y="160.20" width="2.75" height="1.6" fill="#75715e" fill-opacity="0.6"/><rect x="911.30" y="160.20" width="2.75" height="1.6" fill="#75715e" fill-opacity="0.6"/><rect x="897.58" y="162.20" width="0.92" height="1.6" fill="#75715e" fill-opacity="0.6"/><rect x="899.40" y="162.20" width="6.41" height="1.6" fill="#f92672" fill-opacity="0.6"/><rect x="906.73" y="162.20" width="22.88" height="1.6" fill="#75715e" fill-opacity="0.6"/><rect x="897.58" y="164.20" width="1.83" height="1.6" fill="#75715e" fill-opacity="0.6"/><rect x="896.66" y="166.20" width="5.49" height="1.6" fill="#f92672" fill-opacity="0.6"/><rect x="903.07" y="166.20" width="7.32" height="1.6" fill="#66d9ef" fill-opacity="0.6"/><rect x="911.30" y="166.20" width="4.58" height="1.6" fill="#a6e22e" fill-opacity="0.6"/><rect x="915.88" y="166.20" width="0.92" height="1.6" fill="#f8f8f2" fill-opacity="0.5"/><rect x="916.79" y="166.20" width="9.15" height="1.6" fill="#fd971f" fill-opacity="0.6"/><rect x="925.94" y="166.20" width="0.92" height="1.6" fill="#f8f8f2" fill-opacity="0.5"/><rect x="896.66" y="168.20" width="0.92" height="1.6" fill="#f8f8f2" fill-opacity="0.5"/><rect x="900.32" y="170.20" width="5.49" height="1.6" fill="#f92672" fill-opacity="0.6"/><rect x="906.73" y="170.20" width="4.58" height="1.6" fill="#fd971f" fill-opacity="0.6"/><rect x="911.30" y="170.20" width="1.83" height="1.6" fill="#f8f8f2" fill-opacity="0.5"/><rect x="913.13" y="170.20" width="4.58" height="1.6" fill="#66d9ef" fill-opacity="0.6"/><rect x="917.71" y="170.20" width="0.92" height="1.6" fill="#f8f8f2" fill-opacity="0.5"/><rect x="918.62" y="170.20" width="16.47" height="1.6" fill="#66d9ef" fill-opacity="0.6"/><rect x="935.09" y="170.20" width="8.23" height="1.6" fill="#f8f8f2" fill-opacity="0.5"/><rect x="903.98" y="174.20" width="3.66" height="1.6" fill="#e6db74" fill-opacity="0.6"/><rect x="908.55" y="174.20" width="1.83" height="1.6" fill="#f92672" fill-opacity="0.6"/><rect x="911.30" y="174.20" width="10.07" height="1.6" fill="#f8f8f2" fill-opacity="0.5"/><rect x="900.32" y="176.20" width="2.75" height="1.6" fill="#f8f8f2" fill-opacity="0.5"/><rect x="896.66" y="178.20" width="0.92" height="1.6" fill="#f8f8f2" fill-opacity="0.5"/><rect x="896.66" y="182.20" width="2.75" height="1.6" fill="#75715e" fill-opacity="0.6"/><rect x="897.58" y="184.20" width="0.92" height="1.6" fill="#75715e" fill-opacity="0.6"/><rect x="899.40" y="184.20" width="5.49" height="1.6" fill="#75715e" fill-opacity="0.6"/><rect x="905.81" y="184.20" width="2.75" height="1.6" fill="#75715e" fill-opacity="0.6"/><rect x="909.47" y="184.20" width="8.23" height="1.6" fill="#75715e" fill-opacity="0.6"/><rect x="918.62" y="184.20" width="7.32" height="1.6" fill="#75715e" fill-opacity="0.6"/><rect x="926.86" y="184.20" width="1.83" height="1.6" fill="#75715e" fill-opacity="0.6"/><rect x="929.60" y="184.20" width="7.32" height="1.6" fill="#75715e" fill-opacity="0.6"/><rect x="897.58" y="186.20" width="0.92" height="1.6" fill="#75715e" fill-opacity="0.6"/><rect x="897.58" y="188.20" width="0.92" height="1.6" fill="#75715e" fill-opacity="0.6"/><rect x="899.40" y="188.20" width="5.49" height="1.6" fill="#f92672" fill-opacity="0.6"/><rect x="906.73" y="188.20" width="21.96" height="1.6" fill="#75715e" fill-opacity="0.6"/><rect x="930.51" y="188.20" width="7.32" height="1.6" fill="#75715e" fill-opacity="0.6"/><rect x="897.58" y="190.20" width="0.92" height="1.6" fill="#75715e" fill-opacity="0.6"/><rect x="899.40" y="190.20" width="5.49" height="1.6" fill="#f92672" fill-opacity="0.6"/><rect x="906.73" y="190.20" width="2.75" height="1.6" fill="#75715e" fill-opacity="0.6"/><rect x="911.30" y="190.20" width="2.75" height="1.6" fill="#75715e" fill-opacity="0.6"/><rect x="897.58" y="192.20" width="0.92" height="1.6" fill="#75715e" fill-opacity="0.6"/><rect x="899.40" y="192.20" width="6.41" height="1.6" fill="#f92672" fill-opacity="0.6"/><rect x="906.73" y="192.20" width="22.88" height="1.6" fill="#75715e" fill-opacity="0.6"/><rect x="897.58" y="194.20" width="1.83" height="1.6" fill="#75715e" fill-opacity="0.6"/><rect x="896.66" y="196.20" width="5.49" height="1.6" fill="#f92672" fill-opacity="0.6"/><rect x="903.07" y="196.20" width="7.32" height="1.6" fill="#66d9ef" fill-opacity="0.6"/><rect x="911.30" y="196.20" width="5.49" height="1.6" fill="#a6e22e" fill-opacity="0.6"/><rect x="916.79" y="196.20" width="0.92" height="1.6" fill="#f8f8f2" fill-opacity="0.5"/><rect x="917.71" y="196.20" width="6.41" height="1.6" fill="#66d9ef" fill-opacity="0.6"/><rect x="925.02" y="196.20" width="7.32" height="1.6" fill="#fd971f" fill-opacity="0.6"/><rect x="932.35" y="196.20" width="0.92" height="1.6" fill="#f8f8f2" fill-opacity="0.5"/><rect x="934.17" y="196.20" width="2.75" height="1.6" fill="#fd971f" fill-opacity="0.6"/><rect x="936.92" y="196.20" width="0.92" height="1.6" fill="#f8f8f2" fill-opacity="0.5"/><rect x="896.66" y="198.20" width="0.92" height="1.6" fill="#f8f8f2" fill-opacity="0.5"/><rect x="900.32" y="200.20" width="1.83" height="1.6" fill="#75715e" fill-opacity="0.6"/><rect x="896.66" y="202.20" width="0.92" height="1.6" fill="#f8f8f2" fill-opacity="0.5"/><rect x="896.66" y="206.20" width="2.75" height="1.6" fill="#75715e" fill-opacity="0.6"/><rect x="897.58" y="208.20" width="0.92" height="1.6" fill="#75715e" fill-opacity="0.6"/><rect x="899.40" y="208.20" width="5.49" height="1.6" fill="#75715e" fill-opacity="0.6"/><rect x="905.81" y="208.20" width="2.75" height="1.6" fill="#75715e" fill-opacity="0.6"/><rect x="909.47" y="208.20" width="8.23" height="1.6" fill="#75715e" fill-opacity="0.6"/><rect x="918.62" y="208.20" width="7.32" height="1.6" fill="#75715e" fill-opacity="0.6"/><rect x="926.86" y="208.20" width="3.66" height="1.6" fill="#75715e" fill-opacity="0.6"/><rect x="931.43" y="208.20" width="7.32" height="1.6" fill="#75715e" fill-opacity="0.6"/><rect x="897.58" y="210.20" width="0.92" height="1.6" fill="#75715e" fill-opacity="0.6"/><rect x="897.58" y="212.20" width="0.92" height="1.6" fill="#75715e" fill-opacity="0.6"/><rect x="899.40" y="212.20" width="5.49" height="1.6" fill="#f92672" fill-opacity="0.6"/><rect x="906.73" y="212.20" width="2.75" height="1.6" fill="#75715e" fill-opacity="0.6"/><rect x="911.30" y="212.20" width="2.75" height="1.6" fill="#75715e" fill-opacity="0.6"/><rect x="897.58" y="214.20" width="0.92" height="1.6" fill="#75715e" fill-opacity="0.6"/><rect x="899.40" y="214.20" width="6.41" height="1.6" fill="#f92672" fill-opacity="0.6"/><rect x="906.73" y="214.20" width="22.88" height="1.6" fill="#75715e" fill-opacity="0.6"/><rect x="897.58" y="216.20" width="1.83" height="1.6" fill="#75715e" fill-opacity="0.6"/><rect x="896.66" y="218.20" width="5.49" height="1.6" fill="#f92672" fill-opacity="0.6"/><rect x="903.07" y="218.20" width="7.32" height="1.6" fill="#66d9ef" fill-opacity="0.6"/><rect x="911.30" y="218.20" width="6.41" height="1.6" fill="#a6e22e" fill-opacity="0.6"/><rect x="917.71" y="218.20" width="0.92" height="1.6" fill="#f8f8f2" fill-opacity="0.5"/><rect x="918.62" y="218.20" width="2.75" height="1.6" fill="#fd971f" fill-opacity="0.6"/><rect x="921.37" y="218.20" width="0.92" height="1.6" fill="#f8f8f2" fill-opacity="0.5"/><rect x="896.66" y="220.20" width="0.92" height="1.6" fill="#f8f8f2" fill-opacity="0.5"/><rect x="900.32" y="222.20" width="1.83" height="1.6" fill="#75715e" fill-opacity="0.6"/><rect x="896.66" y="224.20" width="0.92" height="1.6" fill="#f8f8f2" fill-opacity="0.5"/><rect x="893.00" y="226.20" width="0.92" height="1.6" fill="#f8f8f2" fill-opacity="0.5"/></svg>
</div>
<div id="status">
<svg class="abs" style="left:12px;top:5px" width="16" height="12"><rect x="0.5" y="0.5" width="15" height="11" rx="1.5" fill="none" stroke="#787878"/><rect x="1" y="7.8" width="14" height="3.7" fill="#787878"/></svg>
<span class="abs" style="left:39px;top:4px;font:10.4px 'Liberation Sans',sans-serif;color:#d4d4d0;line-height:14px;white-space:nowrap">INSERT MODE, 52 characters selected</span>
<span class="abs" style="left:1099px;top:4px;font:10.4px 'Liberation Sans',sans-serif;color:#d4d4d0;line-height:14px;white-space:nowrap;transform:scaleX(0.965);transform-origin:0 0">Spaces: 4</span>
<span class="abs" style="left:1211px;top:4px;font:10.4px 'Liberation Sans',sans-serif;color:#d4d4d0;line-height:14px;white-space:nowrap;transform:scaleX(0.965);transform-origin:0 0">PHP</span>
</div>
</body></html>
